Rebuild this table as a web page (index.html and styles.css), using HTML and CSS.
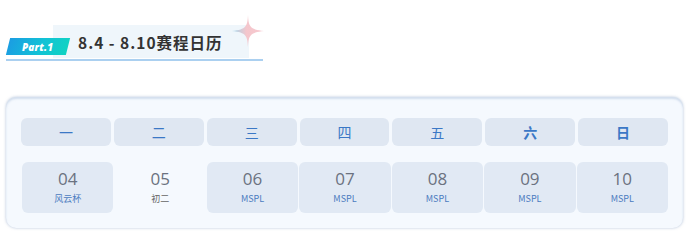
FILE: index.html
```html
<!DOCTYPE html>
<html lang="zh">
<head>
<meta charset="utf-8">
<link rel="stylesheet" href="styles.css">
</head>
<body>
<div class="page">
  <div class="title-bar">
    <div class="badge"><span>Part.1</span></div>
    <div class="title-box">8.4 - 8.10赛程日历</div>
    <svg class="sparkle" width="32" height="32" viewBox="0 0 32 32">
      <defs>
        <linearGradient id="sg" x1="0" y1="0" x2="1" y2="0">
          <stop offset="0" stop-color="#9fd6ec"/>
          <stop offset="0.45" stop-color="#f4c6cc"/>
          <stop offset="1" stop-color="#f7c9cf"/>
        </linearGradient>
      </defs>
      <path d="M16 0 C16.6 11 17.5 14.5 32 16 C17.5 17.5 16.6 21 16 32 C15.4 21 14.5 17.5 0 16 C14.5 14.5 15.4 11 16 0 Z" fill="url(#sg)"/>
    </svg>
  </div>
  <div class="card">
    <div class="week">
      <div class="wd">一</div>
      <div class="wd">二</div>
      <div class="wd">三</div>
      <div class="wd">四</div>
      <div class="wd">五</div>
      <div class="wd bold">六</div>
      <div class="wd bold">日</div>
    </div>
    <div class="days">
      <div class="day on"><div class="num">04</div><div class="lbl">风云杯</div></div>
      <div class="day"><div class="num">05</div><div class="lbl gray">初二</div></div>
      <div class="day on"><div class="num">06</div><div class="lbl">MSPL</div></div>
      <div class="day on"><div class="num">07</div><div class="lbl">MSPL</div></div>
      <div class="day on"><div class="num">08</div><div class="lbl">MSPL</div></div>
      <div class="day on"><div class="num">09</div><div class="lbl">MSPL</div></div>
      <div class="day on"><div class="num">10</div><div class="lbl">MSPL</div></div>
    </div>
  </div>
</div>
</body>
</html>
```

FILE: styles.css
```css
* { box-sizing: border-box; }
html, body { margin: 0; padding: 0; background: #fff; }
body {
  font-family: "Noto Sans CJK SC", "Noto Sans", sans-serif;
  width: 695px;
  height: 245px;
  overflow: hidden;
}
.page {
  padding: 25px 12px 0 6px;
}
.title-bar {
  position: relative;
  width: 257px;
  height: 36px;
  border-bottom: 2px solid #abd0f0;
  display: flex;
  align-items: flex-end;
}
.badge {
  position: relative;
  z-index: 1;
  width: 60px;
  height: 17px;
  margin-left: 2px;
  margin-bottom: 4px;
  transform: skewX(-14deg);
  background: linear-gradient(100deg, #1b9de2 0%, #12c2d6 55%, #10d3c2 100%);
  display: flex;
  align-items: center;
  justify-content: center;
  flex: none;
}
.badge span {
  transform: skewX(14deg);
  display: block;
  color: #fff;
  font-family: "Open Sans", "Noto Sans", sans-serif;
  font-weight: 800;
  font-style: italic;
  font-size: 10px;
  letter-spacing: 0.2px;
  line-height: 1;
}
.title-box {
  position: relative;
  z-index: 0;
  align-self: flex-start;
  margin-left: -15px;
  width: 196px;
  height: 33px;
  background: #eff6fb;
  padding-left: 25px;
  font-weight: 700;
  font-size: 15.5px;
  letter-spacing: 1px;
  color: #333;
  line-height: 34px;
  white-space: nowrap;
}
.sparkle {
  position: absolute;
  left: 226px;
  top: -10px;
}
.card {
  margin-top: 36px;
  width: 677px;
  height: 131px;
  background: #f5f9fe;
  border-radius: 10px;
  box-shadow: 0 0 3px rgba(120, 145, 185, 0.55), inset 0 2px 2px rgba(150, 175, 210, 0.35);
  padding: 21px 15px 0 15px;
}
.week {
  display: grid;
  grid-template-columns: repeat(7, 1fr);
  gap: 3px;
}
.wd {
  height: 28px;
  background: #dfe7f2;
  border-radius: 6px;
  display: flex;
  align-items: center;
  justify-content: center;
  color: #3b78c6;
  font-size: 14px;
}
.wd.bold { font-weight: 700; }
.days {
  margin-top: 16px;
  display: grid;
  grid-template-columns: repeat(7, 1fr);
  gap: 1px;
  padding-left: 1px;
}
.day {
  height: 51px;
  border-radius: 6px;
  display: flex;
  flex-direction: column;
  align-items: center;
  padding-top: 6px;
}
.day.on { background: #e1e9f4; }
.num {
  font-family: "Open Sans", "Noto Sans", sans-serif;
  font-size: 17px;
  color: #6b7280;
  line-height: 22px;
}
.lbl {
  font-size: 9px;
  color: #4b7bbf;
  line-height: 14px;
  margin-top: 2px;
}
.lbl.gray { color: #666; }
```
